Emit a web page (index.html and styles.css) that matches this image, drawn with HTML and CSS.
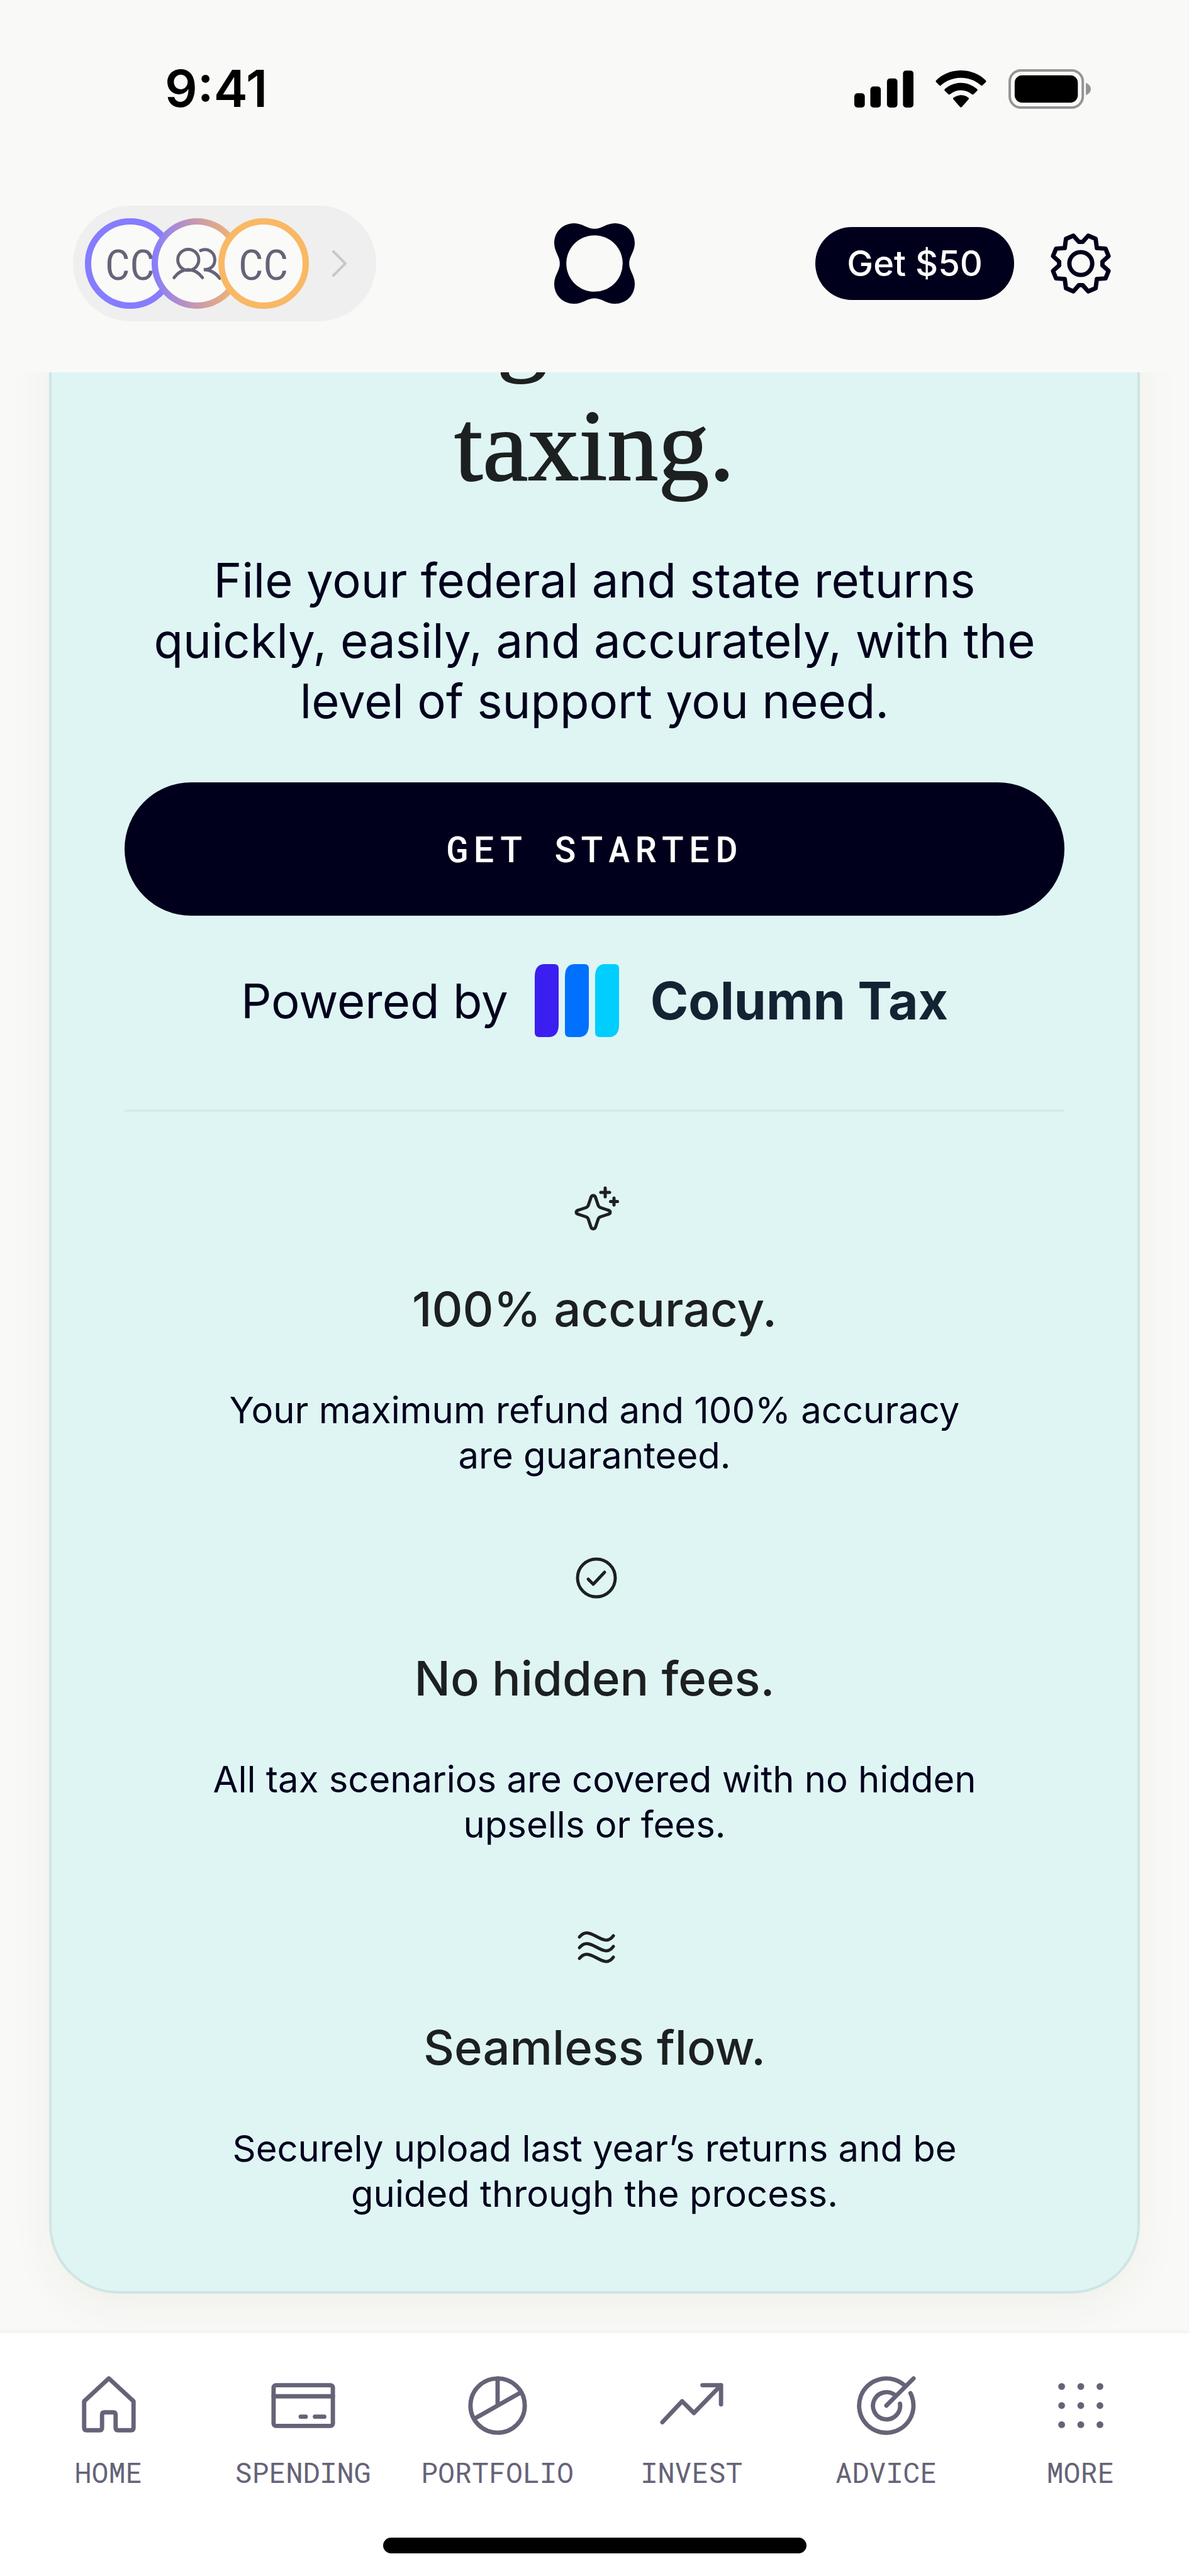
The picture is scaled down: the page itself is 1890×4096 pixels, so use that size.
FILE: index.html
```html
<!DOCTYPE html>
<html lang="en">
<head>
    <meta charset="UTF-8">
    <meta name="viewport" content="width=device-width, initial-scale=1.0">
    <title>Taxes</title>
    <link rel="stylesheet" href="styles.css">
</head>
<body>
    <div id="app">
        <header class="header">
            <div class="status">
                <span class="time">9:41</span>
                <div class="status-icons">
                    <svg width="94" height="59" viewBox="0 0 96 60">
                        <rect x="0" y="37" width="17" height="23" rx="5"/>
                        <rect x="26" y="26" width="17" height="34" rx="5"/>
                        <rect x="53" y="13" width="17" height="47" rx="5"/>
                        <rect x="79" y="0" width="17" height="60" rx="5"/>
                    </svg>
                    <svg width="81" height="59" viewBox="0 0 82 60">
                        <path d="M41 0C57 0 71 6 81 16Q82.500 17.500 81 19L76 24Q74.500 25.500 73 24C64 16 53 12 41 12S18 16 9 24Q7.500 25.500 6 24L1 19Q-.5 17.500 1 16C11 6 25 0 41 0Z"/>
                        <path d="M41 20C51 20 60 24 67 30Q68.500 31.500 67 33L61.500 38.500Q60 40 58.500 38.500C53 34 47 32 41 32S29 34 23.500 38.500Q22 40 20.500 38.500L15 33Q13.500 31.500 15 30C22 24 31 20 41 20Z"/>
                        <path d="M41 40C45.500 40 49.500 41.500 53 44Q54.500 45.500 53 47L42.500 59Q41 60.500 39.500 59L29 47Q27.500 45.500 29 44C32.500 41.500 36.500 40 41 40Z"/>
                    </svg>
                    <svg width="131" height="63" viewBox="0 0 133 64">
                        <rect x="2" y="2" width="118" height="60" rx="18" fill="none" stroke="#949494" stroke-width="4"/>
                        <rect x="10" y="10" width="102" height="44" rx="12"/>
                        <path d="M125 22C130 24 133 28 133 32S130 40 125 42Z" fill="#949494"/>
                    </svg>
                </div>
            </div>
            <div class="topbar">
                <button class="people" aria-label="Profiles">
                    <span class="avatar violet">CC</span>
                    <span class="avatar joint">
                        <svg width="106" height="106" viewBox="-54 -54 108 108">
                            <circle cx="-14" cy="-6" r="17"/>
                            <path d="M-37 23C-31 15 -23 10 -14 10S3 15 9 23"/>
                            <path d="M6 -21C18 -26 29 -18 29 -6C29 4 22 10 11 10C22 10 31 16 37 24"/>
                        </svg>
                    </span>
                    <span class="avatar amber">CC</span>
                    <svg class="chevron" width="26" height="42" viewBox="0 0 26 42"><path d="M3 2L22 21L3 40"/></svg>
                </button>
                <svg class="logo" width="128" height="128" viewBox="0 0 130 130">
                    <path fill-rule="evenodd" d="M65 9C77 9 84 0 98 0C116 0 130 14 130 32C130 46 121 53 121 65S130 84 130 98C130 116 116 130 98 130C84 130 77 121 65 121S46 130 32 130C14 130 0 116 0 98C0 84 9 77 9 65S0 46 0 32C0 14 14 0 32 0C46 0 53 9 65 9ZM65 19.500A45.500 45.500 0 1 0 65 110.500A45.500 45.500 0 1 0 65 19.500Z"/>
                </svg>
                <div class="actions">
                    <button class="bonus">Get $50</button>
                    <button class="gear" aria-label="Settings">
                        <svg width="112" height="112" viewBox="-57 -57 114 114">
                            <path d="M-3 -35H3L12 -45L24 -40L26 -25L40 -24L45 -12L35 -3V3L45 12L40 24L26 25L24 40L12 45L3 35H-3L-12 45L-24 40L-26 25L-40 24L-45 12L-35 3V-3L-45 -12L-40 -24L-26 -25L-24 -40L-12 -45Z"/>
                            <circle r="18.500"/>
                        </svg>
                    </button>
                </div>
            </div>
        </header>

        <main class="content">
            <div class="card">
                <h1>Filing without<br>taxing.</h1>
                <p class="intro">File your federal and state returns quickly, easily, and accurately, with the level of support you need.</p>
                <button class="start">GET STARTED</button>
                <div class="powered">
                    <span>Powered by</span>
                    <svg width="134" height="116" viewBox="0 0 134 116">
                        <path fill="#3b1ff0" d="M16 0H31Q38 0 38 7V96Q38 116 22 116H7Q0 116 0 109V20Q0 0 16 0Z"/>
                        <path fill="#0070ff" d="M64 0H79Q86 0 86 7V96Q86 116 70 116H55Q48 116 48 109V20Q48 0 64 0Z"/>
                        <path fill="#00ceff" d="M112 0H127Q134 0 134 7V96Q134 116 118 116H103Q96 116 96 109V20Q96 0 112 0Z"/>
                    </svg>
                    <strong>Column Tax</strong>
                </div>
                <hr>
                <div class="items">
                    <div class="item">
                        <svg width="80" height="80" viewBox="-4 0 80 80">
                            <path d="M34 19Q37 19 38 23L42 35Q43 37 45 38L57 42Q61 43 61 45.500T57 49L45 53Q43 54 42 56L38 68Q37 72 34 72T30 68L26 56Q25 54 23 53L11 49Q7 48 7 45.500T11 42L23 38Q25 37 26 35L30 23Q31 19 34 19Z"/>
                            <path d="M53 7V21M46 14H60M67 23V34M61.500 28.500H72.500"/>
                        </svg>
                        <h2>100% accuracy.</h2>
                        <p>Your maximum refund and 100% accuracy are guaranteed.</p>
                    </div>
                    <div class="item">
                        <svg width="80" height="80" viewBox="0 0 80 80">
                            <circle cx="43" cy="40" r="30"/>
                            <path d="M30 42L38 50L56 31"/>
                        </svg>
                        <h2>No hidden fees.</h2>
                        <p>All tax scenarios are covered with no hidden upsells or fees.</p>
                    </div>
                    <div class="item">
                        <svg width="80" height="80" viewBox="0 0 80 80">
                            <path d="M16 24C24 14 32 17 43 23S62 33 70 22"/>
                            <path d="M16 41C24 31 32 34 43 40S62 50 70 39"/>
                            <path d="M16 58C24 48 32 51 43 57S62 67 70 56"/>
                        </svg>
                        <h2>Seamless flow.</h2>
                        <p>Securely upload last year’s returns and be guided through the process.</p>
                    </div>
                </div>
            </div>
        </main>

        <footer class="footer">
            <nav class="tabs">
                <a href="#">
                    <svg width="106" height="106" viewBox="-54 -54 108 108"><path d="M0 -44L40 -7V36Q40 40 36 40H15Q11 40 11 36V15Q11 11 7 11H-7Q-11 11 -11 15V36Q-11 40 -15 40H-36Q-40 40 -40 36V-7Z"/></svg>
                    <span>HOME</span>
                </a>
                <a href="#">
                    <svg width="106" height="106" viewBox="-54 -54 108 108"><rect x="-48" y="-33" width="96" height="66" rx="4"/><path d="M-48 -15H48M-4 18H4M19 18H34"/></svg>
                    <span>SPENDING</span>
                </a>
                <a href="#">
                    <svg width="106" height="106" viewBox="-54 -54 108 108"><circle r="44"/><path d="M0 -44V0M-37 21L37 -21"/></svg>
                    <span>PORTFOLIO</span>
                </a>
                <a href="#">
                    <svg width="106" height="106" viewBox="-54 -54 108 108"><path d="M-48 27L-16 -7L3 12L47 -33M17 -33H47V-2"/></svg>
                    <span>INVEST</span>
                </a>
                <a href="#">
                    <svg width="106" height="106" viewBox="-54 -54 108 108"><path d="M31 -31A44 44 0 1 0 39 -20M15 -16A22 22 0 1 0 22 -3M0 0L44 -44"/></svg>
                    <span>ADVICE</span>
                </a>
                <a href="#">
                    <svg class="dots" width="106" height="106" viewBox="-54 -54 108 108">
                        <circle cx="-31" cy="-31" r="5.500"/><circle cx="0" cy="-31" r="5.500"/><circle cx="31" cy="-31" r="5.500"/>
                        <circle cx="-31" cy="0" r="5.500"/><circle cx="0" cy="0" r="5.500"/><circle cx="31" cy="0" r="5.500"/>
                        <circle cx="-31" cy="31" r="5.500"/><circle cx="0" cy="31" r="5.500"/><circle cx="31" cy="31" r="5.500"/>
                    </svg>
                    <span>MORE</span>
                </a>
            </nav>
            <div class="home-bar"></div>
        </footer>
    </div>
</body>
</html>
```

FILE: styles.css
```css
*{
    margin: 0;
    padding: 0;
    box-sizing: border-box;
}
body{
    background-color: #f9f9f7;
    color: #00001c;
    font-family: Inter, "Liberation Sans", sans-serif;
}
button{
    border: none;
    background: none;
    font-family: inherit;
    cursor: pointer;
}
svg{
    display: block;
    flex-shrink: 0;
}
#app{
    min-height: 100vh;
    display: flex;
    flex-direction: column;
}

/* header */
.status{
    height: 282px;
    padding: 0 156px 0 262px;
    display: flex;
    justify-content: space-between;
    align-items: center;
    color: #000;
}
.time{
    font-size: 81px;
    font-weight: 600;
}
.status-icons{
    display: flex;
    align-items: center;
    gap: 35px;
}
.topbar{
    padding: 45px 116px 81px;
    display: grid;
    grid-template-columns: 1fr auto 1fr;
    align-items: center;
}
.people{
    justify-self: start;
    height: 184px;
    padding: 0 45px 0 19px;
    border-radius: 92px;
    background-color: #efefef;
    display: flex;
    align-items: center;
}
.avatar{
    width: 144px;
    height: 144px;
    border: 10px solid;
    border-radius: 50%;
    background-color: #fafaf8;
    display: flex;
    justify-content: center;
    align-items: center;
    font-family: "Roboto Mono", Roboto, sans-serif;
    font-size: 66px;
    color: #666378;
}
.avatar + .avatar{
    margin-left: -38px;
}
.avatar svg{
    fill: none;
    stroke: #666378;
    stroke-width: 5;
    stroke-linecap: round;
}
.violet{
    border-color: #857cff;
}
.joint{
    border-color: transparent;
    background: linear-gradient(#fafaf8, #fafaf8) padding-box, linear-gradient(90deg, #857cff, #c99aac 50%, #f9b864) border-box;
}
.amber{
    border-color: #f9b864;
}
.chevron{
    margin-left: 36px;
    fill: none;
    stroke: #c8c8c8;
    stroke-width: 4;
    stroke-linecap: round;
    stroke-linejoin: round;
}
.logo{
    fill: #00001c;
}
.actions{
    justify-self: end;
    display: flex;
    align-items: center;
    gap: 50px;
}
.bonus{
    height: 116px;
    padding: 0 50px;
    border-radius: 58px;
    background-color: #00001c;
    color: #fff;
    font-size: 56px;
    font-weight: 500;
}
.gear svg{
    fill: none;
    stroke: #00001c;
    stroke-width: 7;
    stroke-linejoin: round;
}

/* card, scrolled part of the way under the header */
.content{
    flex: 1;
    overflow: hidden;
    padding: 0 78px 56px;
}
.card{
    margin-top: -284px;
    padding: 116px 116px 119px;
    border: 4px solid #cfe5e3;
    border-radius: 110px;
    background-color: #dff5f4;
    box-shadow: 0 20px 70px rgba(60, 50, 20, .05);
    text-align: center;
}
.card h1{
    font-family: "Liberation Serif", serif;
    font-size: 162px;
    font-weight: 400;
    line-height: 187px;
    color: #1d2020;
    -webkit-text-stroke: 2px #1d2020;
}
.intro{
    padding: 0 40px;
    margin: 72px 0 82px;
    font-size: 76px;
    line-height: 96px;
}
.start{
    display: block;
    width: 100%;
    height: 212px;
    padding-bottom: 4px;
    border-radius: 106px;
    background-color: #00001c;
    color: #fff;
    font-family: "Roboto Mono", "DejaVu Sans Mono", monospace;
    font-size: 58px;
    font-weight: 500;
    letter-spacing: 8px;
}
.powered{
    margin: 77px 0 115px;
    display: flex;
    justify-content: center;
    align-items: center;
    font-size: 76px;
}
.powered svg{
    margin: 0 50px 0 42px;
}
.powered strong{
    font-size: 82px;
    font-weight: 700;
    color: #142333;
}
.card hr{
    border: none;
    border-top: 4px solid #d5ebe9;
    margin-bottom: 114px;
}
.items{
    display: flex;
    flex-direction: column;
    gap: 119px;
}
.item{
    display: flex;
    flex-direction: column;
    align-items: center;
}
.item svg{
    fill: none;
    stroke: #1d2020;
    stroke-width: 5;
    stroke-linecap: round;
    stroke-linejoin: round;
}
.item h2{
    margin: 71px 0 77px;
    font-size: 76px;
    font-weight: 500;
    line-height: 96px;
    color: #1d2020;
}
.item p{
    max-width: 1250px;
    font-size: 58px;
    line-height: 72px;
}

/* bottom tabs */
.footer{
    padding: 62px 18px 36px;
    border-top: 5px solid #f5f5f3;
    background-color: #fff;
}
.tabs{
    display: grid;
    grid-template-columns: repeat(6, 1fr);
}
.tabs a{
    display: flex;
    flex-direction: column;
    align-items: center;
    gap: 27px;
    color: #666378;
    font-family: "Roboto Mono", "DejaVu Sans Mono", monospace;
    font-size: 45px;
    line-height: 52px;
    text-decoration: none;
}
.tabs svg{
    fill: none;
    stroke: #666378;
    stroke-width: 7;
    stroke-linecap: round;
    stroke-linejoin: round;
}
.tabs .dots{
    fill: #666378;
    stroke: none;
}
.home-bar{
    width: 673px;
    height: 25px;
    margin: 78px auto 0;
    border-radius: 13px;
    background-color: #000;
}
```
